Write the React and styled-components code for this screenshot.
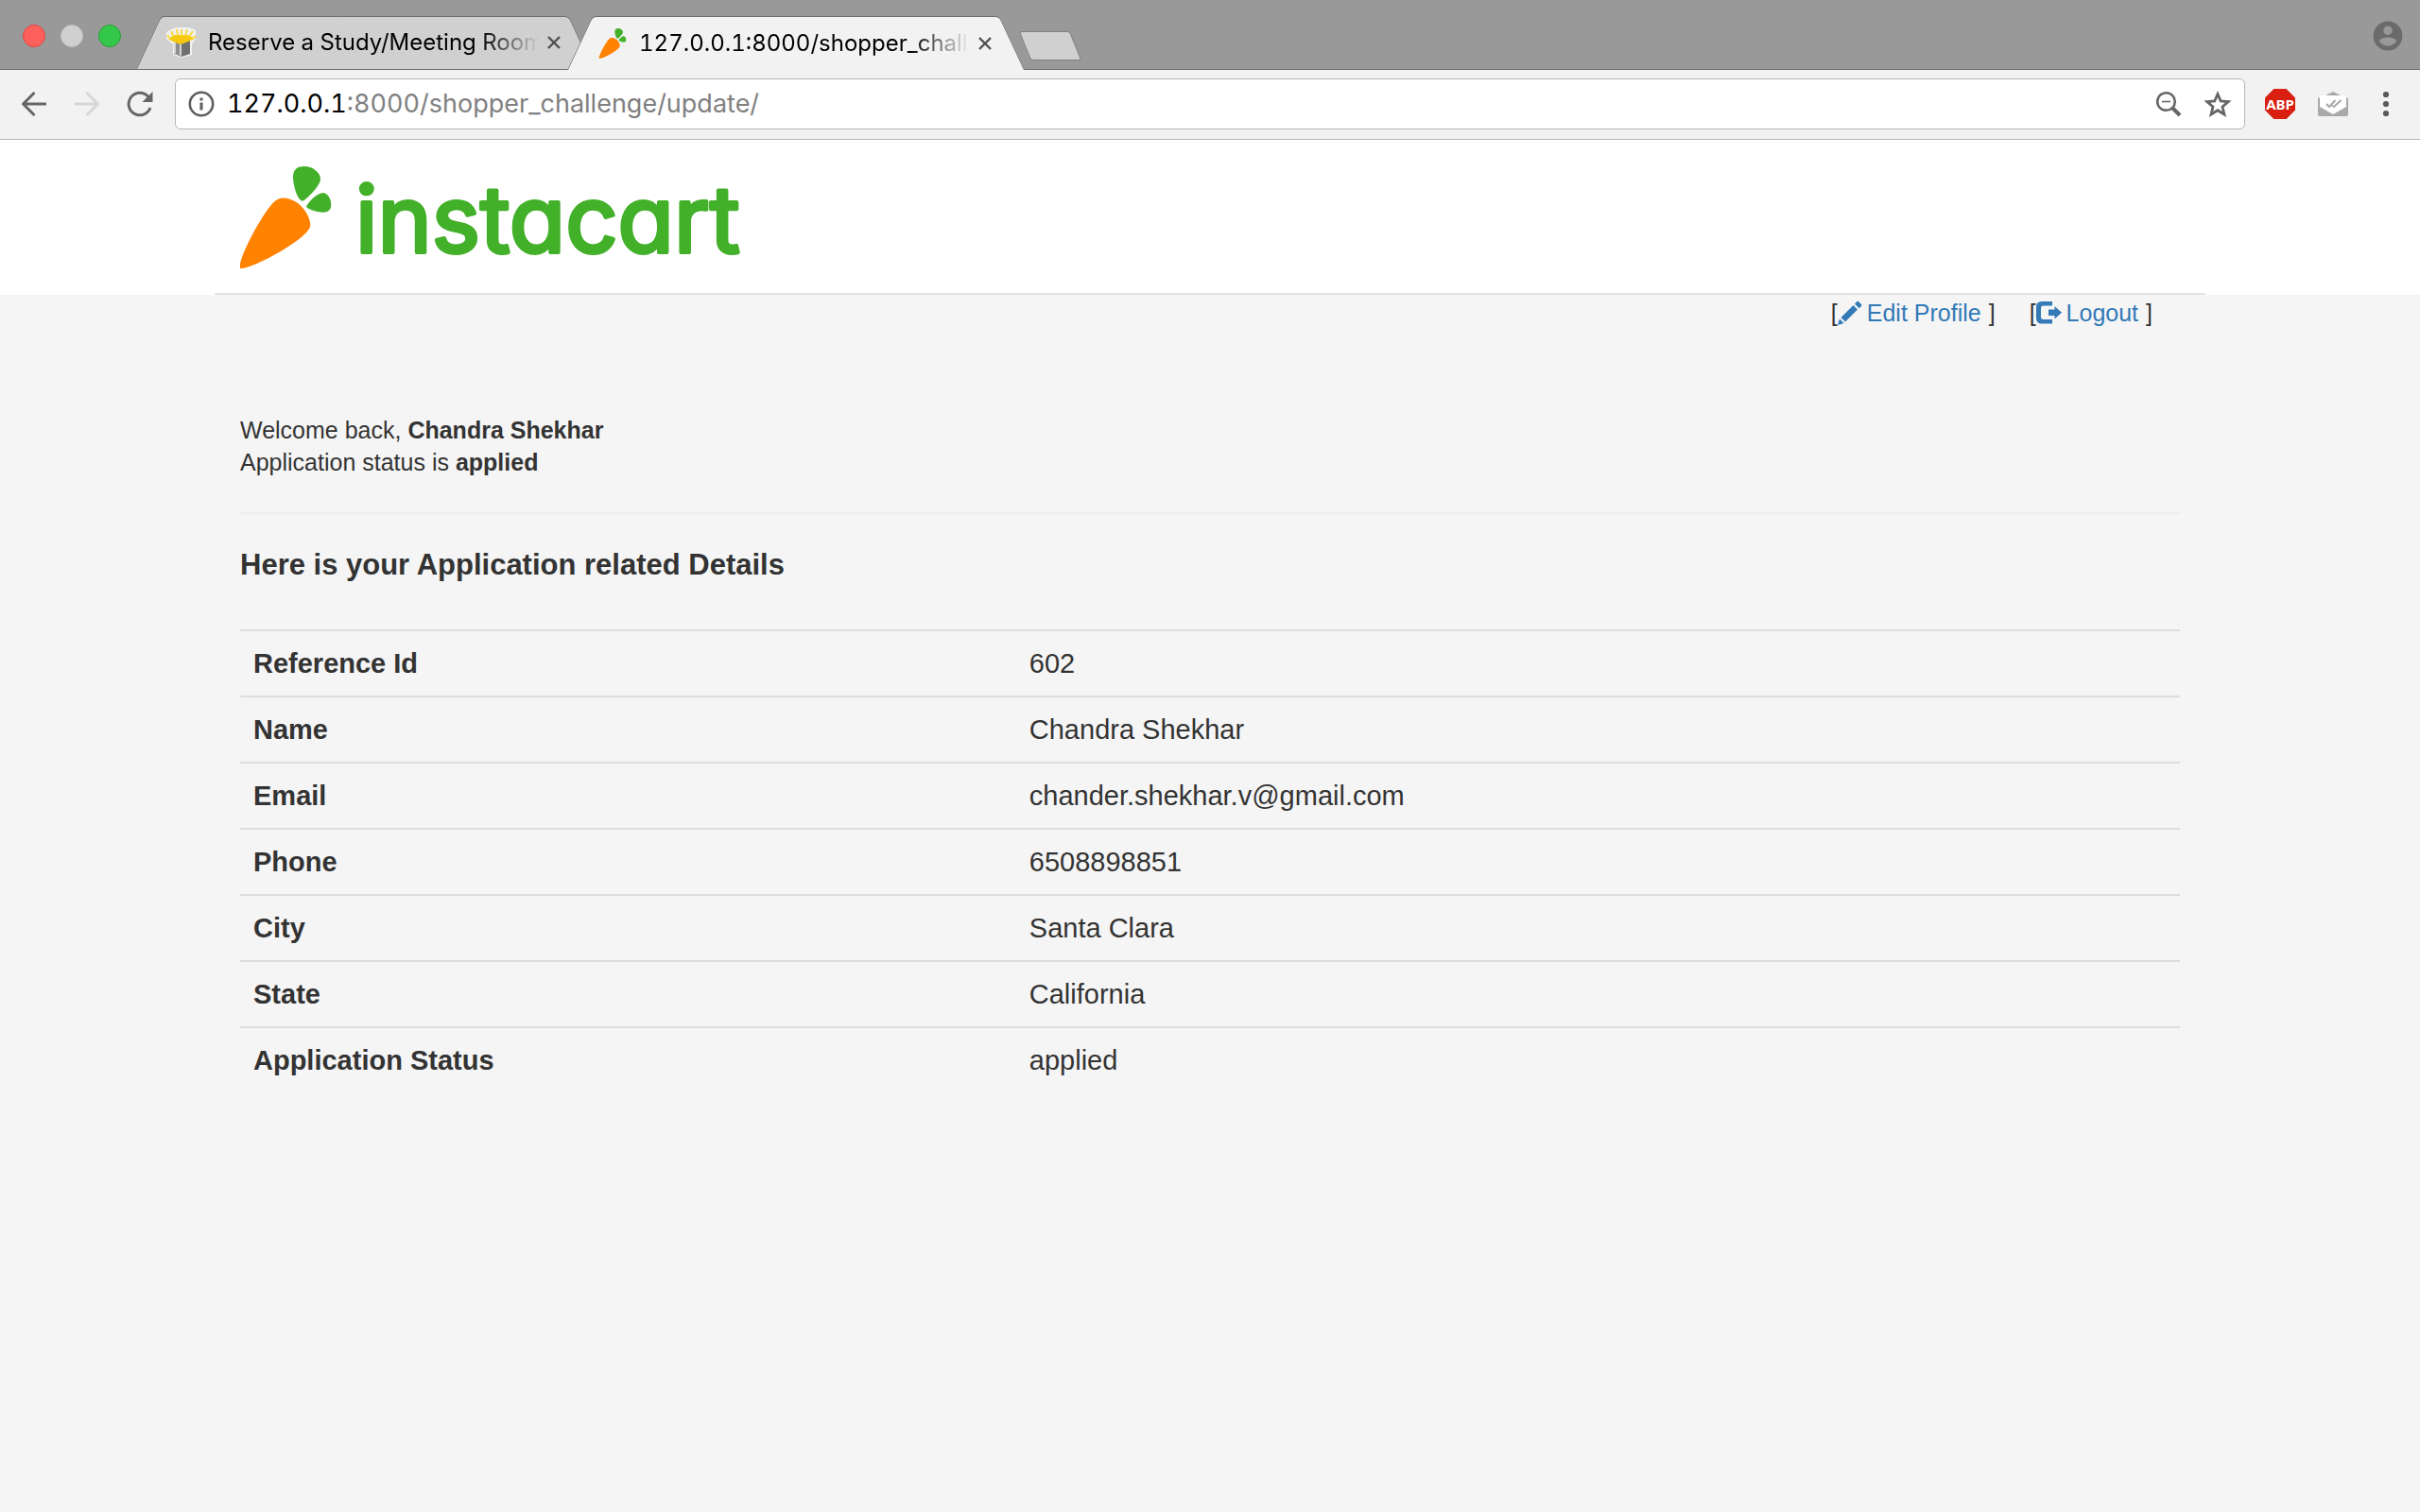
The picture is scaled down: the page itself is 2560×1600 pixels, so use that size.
import React from "react";
import styled, { createGlobalStyle, css } from "styled-components";

const GlobalStyle = createGlobalStyle`
  *, *::before, *::after { box-sizing: border-box; }
  html, body { margin: 0; padding: 0; }
  body {
    background: #f5f5f5;
    color: #333;
    font-family: "Liberation Sans", Arial, sans-serif;
    font-size: 25px;
    line-height: 34px;
  }
`;

const Screen = styled.div`
  min-height: 100vh;
  display: flex;
  flex-direction: column;
`;

/* ---------- browser window ---------- */

const chromeFont = css`
  font-family: Inter, Roboto, sans-serif;
  font-variant-numeric: tabular-nums;
`;

const TabStrip = styled.div`
  ${chromeFont}
  display: flex;
  align-items: flex-start;
  height: 74px;
  padding: 0 16px 0 24px;
  background: #999;
  box-shadow: inset 0 -1px 0 #6c6c6c;
`;

const WindowButtons = styled.div`
  display: flex;
  gap: 16px;
  padding-top: 26px;
  width: 120px;
`;

const WindowButton = styled.button`
  width: 24px;
  height: 24px;
  padding: 0;
  border: 1px solid ${(p) => p.$edge};
  border-radius: 50%;
  background: ${(p) => p.$fill};
`;

const Tab = styled.div`
  position: relative;
  z-index: ${(p) => (p.$active ? 2 : 1)};
  display: flex;
  align-items: center;
  width: 484px;
  height: ${(p) => (p.$active ? 57 : 56)}px;
  margin: 17px 0 0 ${(p) => (p.$active ? -28 : 0)}px;
  padding: 0 34px 0 32px;

  &::before,
  &::after {
    content: "";
    position: absolute;
    z-index: -1;
    top: 0;
    bottom: 0;
    width: 50%;
    background: ${(p) => (p.$active ? "#f2f2f2" : "#d0d0d0")};
    border-top: 1px solid #6c6c6c;
  }
  &::before {
    left: 0;
    border-left: 1px solid #6c6c6c;
    border-top-left-radius: 5px;
    transform: skewX(-25deg);
    transform-origin: bottom;
  }
  &::after {
    right: 0;
    border-right: 1px solid #6c6c6c;
    border-top-right-radius: 5px;
    transform: skewX(25deg);
    transform-origin: bottom;
  }
`;

const TabTitle = styled.span`
  flex: 1;
  min-width: 0;
  margin: 0 4px 0 12px;
  overflow: hidden;
  white-space: nowrap;
  color: #000;
  font-size: 24px;
  line-height: 34px;
  mask-image: linear-gradient(to right, #000 calc(100% - 66px), transparent calc(100% - 4px));
`;

const IconButton = styled.button`
  display: flex;
  align-items: center;
  justify-content: center;
  flex: none;
  width: ${(p) => p.$width}px;
  height: 32px;
  padding: 0;
  border: 0;
  background: none;
  color: ${(p) => p.$color || "#666"};
`;

const NewTab = styled.button`
  width: 54px;
  height: 31px;
  margin: 33px 0 0 0;
  padding: 0;
  border: 1px solid #808080;
  border-radius: 3px;
  background: #d0d0d0;
  transform: skewX(22deg);
`;

const Profile = styled.div`
  margin: 22px 0 0 auto;
`;

const Toolbar = styled.div`
  ${chromeFont}
  display: flex;
  align-items: center;
  height: 74px;
  padding: 0 16px 1px 16px;
  background: #f2f2f2;
  border-bottom: 1px solid #b6b6b6;
`;

const NavButtons = styled.div`
  display: flex;
  gap: 16px;
  width: 169px;
`;

const Omnibox = styled.div`
  display: flex;
  align-items: center;
  flex: 1;
  height: 54px;
  padding: 0 8px 0 10px;
  background: #fff;
  border: 1px solid #b6b6b6;
  border-radius: 6px;
  font-size: 27px;
  line-height: 36px;
`;

const Host = styled.label`
  margin-left: 10px;
  color: #000;
`;

const UrlInput = styled.input`
  flex: 1;
  min-width: 0;
  padding: 0;
  border: 0;
  outline: 0;
  background: none;
  color: #808080;
  font: inherit;
  font-variant-numeric: inherit;
`;

const OmniboxActions = styled.div`
  display: flex;
  gap: 12px;
`;

const Extensions = styled.div`
  display: flex;
  align-items: center;
  gap: 16px;
  margin-left: 17px;
`;

/* ---------- page ---------- */

const SiteHeader = styled.header`
  background: #fff;
`;

const Container = styled.div`
  max-width: 2106px;
  margin: 0 auto;
  padding: 0 27px;
`;

const HeaderInner = styled(Container)`
  padding-top: 28px;
  padding-bottom: 26px;
  border-bottom: 2px solid #e3e3e3;
`;

const LogoLink = styled.a`
  display: flex;
  width: fit-content;
`;

const Wordmark = styled.text`
  font-family: Inter, "Liberation Sans", sans-serif;
  font-size: 97px;
  font-weight: 400;
  font-feature-settings: "cv11" 1;
  fill: #43b02a;
  stroke: #43b02a;
  stroke-width: 4px;
  stroke-linejoin: round;
`;

const AccountNav = styled.nav`
  display: flex;
  justify-content: flex-end;
  gap: 36px;
  padding: 2px 29px 0 0;
`;

const AccountItem = styled.span`
  display: flex;
  align-items: center;
  gap: 8px;
`;

const AccountLink = styled.a`
  display: flex;
  align-items: center;
  gap: 5px;
  color: #337ab7;
  text-decoration: none;
`;

const Bracketed = styled.span`
  display: flex;
  align-items: center;
`;

const Welcome = styled.p`
  margin: 90px 0 36px;
`;

const Divider = styled.hr`
  height: 2px;
  margin: 0;
  border: 0;
  background: #eee;
`;

const Heading = styled.h4`
  margin: 36px 0 50px;
  font-size: 31px;
  line-height: 36px;
  font-weight: 700;
`;

const Details = styled.table`
  width: 100%;
  border-collapse: separate;
  border-spacing: 0;
  table-layout: fixed;
  font-size: 29px;
  line-height: 40px;
`;

const cell = css`
  padding: 14px;
  border-top: 2px solid #ddd;
  text-align: left;
`;

const Label = styled.th`
  ${cell}
  width: 40%;
`;

const Value = styled.td`
  ${cell}
`;

/* ---------- drawings ---------- */

const CarrotShape = () => (
  <g>
    <path
      fill="#ff8200"
      d="M0 108V103C3 88 24 50 35 38.500C40 33 46 32.500 52 34.500C64 38 73 50 74.300 61C74.500 66 71 69 66 74C52 86 20 104 5 107.500C3 108 1 108 0 108Z"
    />
    <path
      fill="#43b02a"
      d="M65 36.500C59 33 56 18 56 11C56 3 61 0 68 0C76 0 85 6 85 13.500C85 20 72 33 67.500 36C66.500 36.600 65.700 36.800 65 36.500Z"
    />
    <path
      fill="#43b02a"
      d="M70.500 41.500C73 37 82 28 88 28C93 28.500 96.500 35 96.300 41C96 46 93 48.700 88 48.700C82 48.700 73 46 70.700 43.500C70 42.800 70 42.200 70.500 41.500Z"
    />
  </g>
);

const Logo = () => (
  <svg width="540" height="108" viewBox="0 0 540 108" overflow="visible">
    <CarrotShape />
    <Wordmark x="122" y="91">instacart</Wordmark>
  </svg>
);

const CarrotIcon = () => (
  <svg width="32" height="32" viewBox="-6 0 108 108">
    <CarrotShape />
  </svg>
);

const PlanterIcon = () => (
  <svg width="32" height="32" viewBox="0 0 32 32">
    <path fill="#fff" opacity=".7" d="M0 5 5 2 11 0H24L31 3V12L27 18V29L17 32 7 29V18L0 12Z" />
    <path fill="#8e8e8e" d="M8 14 17 17V31L8 28Z" />
    <path fill="#707070" d="M16 17 25 14V28L16 31Z" />
    <path fill="#d5d5d5" d="M8 15H10V28L8 27ZM14 18H16V30L14 29Z" />
    <path fill="#f6c90f" d="M2 12 9 8H23L30 12 23 15 15 18 7 15Z" />
    <path
      stroke="#f8d93c"
      strokeWidth="2"
      fill="none"
      d="M4 12 1 8M8 10 5 4M12 9 11 2M16 9V2M20 9 22 2M24 10 28 4M27 12 31 9"
    />
  </svg>
);

const CloseIcon = () => (
  <svg width="14" height="14" viewBox="0 0 14 14" stroke="currentColor" strokeWidth="2.400">
    <path d="M1 1 13 13M13 1 1 13" />
  </svg>
);

const ArrowIcon = ({ flip }) => (
  <svg width="26" height="26" viewBox="0 0 26 26" fill="none" stroke="currentColor" strokeWidth="3">
    <path
      strokeLinejoin="miter"
      d={flip ? "M0 13H24M12.500 1 24.500 13 12.500 25" : "M26 13H2M13.500 1 1.500 13 13.500 25"}
    />
  </svg>
);

const ReloadIcon = () => (
  <svg width="28" height="28" viewBox="0 0 28 28">
    <path d="M23 6.500A11.800 11.800 0 1 0 25 18" fill="none" stroke="currentColor" strokeWidth="3" />
    <path d="M27.500 1V12H16.500Z" fill="currentColor" />
  </svg>
);

const InfoIcon = () => (
  <svg width="32" height="32" viewBox="0 0 32 32">
    <circle cx="16" cy="16" r="12.200" fill="none" stroke="#5f5f5f" strokeWidth="2.600" />
    <path fill="#5f5f5f" d="M14.500 9.500H17.500V12.500H14.500ZM14.500 14.500H17.500V22.500H14.500Z" />
  </svg>
);

const ZoomOutIcon = () => (
  <svg width="28" height="28" viewBox="0 0 28 28" fill="none" stroke="currentColor">
    <circle cx="11.500" cy="11.500" r="9.300" strokeWidth="2.600" />
    <path d="M7 11.500H16" strokeWidth="1.600" />
    <path d="M18.500 18.500 26 26" strokeWidth="4" />
  </svg>
);

const StarIcon = () => (
  <svg width="30" height="28" viewBox="0 0 30 28">
    <path
      fill="none"
      stroke="currentColor"
      strokeWidth="2.800"
      d="M15 3.500 18.200 11 26.200 11.600 20 16.900 21.900 25 15 20.700 8.100 25 10 16.900 3.800 11.600 11.800 11Z"
    />
  </svg>
);

const AbpIcon = () => (
  <svg width="32" height="32" viewBox="0 0 32 32">
    <path fill="#d81f10" d="M9.400 0H22.600L32 9.400V22.600L22.600 32H9.400L0 22.600V9.400Z" />
    <text
      x="16"
      y="22"
      textAnchor="middle"
      fill="#fff"
      fontFamily="Noto Sans, Open Sans, sans-serif"
      fontWeight="700"
      fontSize="15"
    >
      ABP
    </text>
  </svg>
);

const MailIcon = () => (
  <svg width="32" height="28" viewBox="0 0 32 28">
    <path fill="#a9a9a9" d="M8 5 16 1 24 5Z" />
    <rect y="7" width="32" height="20" rx="2" fill="#a9a9a9" />
    <path fill="#fff" d="M2 5H30V17L16 25 2 17Z" />
    <path fill="none" stroke="#a9a9a9" strokeWidth="2" d="M9 14 12 17 18.500 10M15 15.500 17 17 24.500 10" />
  </svg>
);

const MenuIcon = () => (
  <svg width="8" height="28" viewBox="0 0 8 28" fill="#5a5a5a">
    <circle cx="4" cy="4" r="3.100" />
    <circle cx="4" cy="14" r="3.100" />
    <circle cx="4" cy="24" r="3.100" />
  </svg>
);

const ProfileIcon = () => (
  <svg width="32" height="32" viewBox="0 0 32 32">
    <circle cx="16" cy="16" r="15.400" fill="#6b6b6b" />
    <circle cx="16" cy="10.200" r="4.700" fill="#999" />
    <path fill="#999" d="M6.800 21.500C8 18.500 13 17.500 16 17.500S24 18.500 25.200 21.500C23 25 19.500 26.600 16 26.600S9 25 6.800 21.500Z" />
  </svg>
);

const PencilIcon = () => (
  <svg width="26" height="26" viewBox="0 0 26 26" fill="#337ab7">
    <path d="M0 26 2 19.500 6.500 24ZM3.500 18 16.500 5 21 9.500 8 22.500ZM18 3.500 20.500 1Q21.200 .3 22 1L25.200 4.200Q26 5 25.200 5.700L22.700 8.200Z" />
  </svg>
);

const LogoutIcon = () => (
  <svg width="27" height="24" viewBox="0 0 27 24" fill="#337ab7">
    <path d="M17 0V4.600H7.500Q5 4.600 5 7V17Q5 19 7.500 19H17V23.500H6Q0 23.500 0 17.500V6Q0 0 6 0Z" />
    <path d="M13 8.500H19.500V5L27 11.800 19.500 18.500V15H13Z" />
  </svg>
);

/* ---------- content ---------- */

const application = [
  ["Reference Id", "602"],
  ["Name", "Chandra Shekhar"],
  ["Email", "chander.shekhar.v@gmail.com"],
  ["Phone", "6508898851"],
  ["City", "Santa Clara"],
  ["State", "California"],
  ["Application Status", "applied"],
];

const BrowserTab = ({ icon, title, active }) => (
  <Tab $active={active}>
    {icon}
    <TabTitle>{title}</TabTitle>
    <IconButton $width={16} $color="#4f4f4f" aria-label="Close tab">
      <CloseIcon />
    </IconButton>
  </Tab>
);

const AccountAction = ({ icon, children }) => (
  <AccountItem>
    <Bracketed>
      [
      <AccountLink href="#">
        {icon}
        {children}
      </AccountLink>
    </Bracketed>
    ]
  </AccountItem>
);

export default function App() {
  return (
    <Screen>
      <GlobalStyle />
      <TabStrip>
        <WindowButtons>
          <WindowButton $fill="#fc605c" $edge="#e0443e" aria-label="Close" />
          <WindowButton $fill="#d0d0d0" $edge="#bfbfbf" aria-label="Minimize" />
          <WindowButton $fill="#34c84a" $edge="#24a135" aria-label="Zoom" />
        </WindowButtons>
        <BrowserTab icon={<PlanterIcon />} title="Reserve a Study/Meeting Room" />
        <BrowserTab icon={<CarrotIcon />} title="127.0.0.1:8000/shopper_chall" active />
        <NewTab aria-label="New tab" />
        <Profile>
          <IconButton $width={36} aria-label="Profile">
            <ProfileIcon />
          </IconButton>
        </Profile>
      </TabStrip>
      <Toolbar>
        <NavButtons>
          <IconButton $width={40} aria-label="Back">
            <ArrowIcon />
          </IconButton>
          <IconButton $width={40} $color="#d6d6d6" aria-label="Forward">
            <ArrowIcon flip />
          </IconButton>
          <IconButton $width={40} aria-label="Reload">
            <ReloadIcon />
          </IconButton>
        </NavButtons>
        <Omnibox>
          <IconButton $width={34} aria-label="Site information">
            <InfoIcon />
          </IconButton>
          <Host htmlFor="address">127.0.0.1</Host>
          <UrlInput id="address" defaultValue=":8000/shopper_challenge/update/" />
          <OmniboxActions>
            <IconButton $width={40} aria-label="Zoom out">
              <ZoomOutIcon />
            </IconButton>
            <IconButton $width={40} aria-label="Bookmark">
              <StarIcon />
            </IconButton>
          </OmniboxActions>
        </Omnibox>
        <Extensions>
          <IconButton $width={40} aria-label="Adblock Plus">
            <AbpIcon />
          </IconButton>
          <IconButton $width={40} aria-label="Mail tracker">
            <MailIcon />
          </IconButton>
          <IconButton $width={40} aria-label="Menu">
            <MenuIcon />
          </IconButton>
        </Extensions>
      </Toolbar>

      <SiteHeader>
        <HeaderInner>
          <LogoLink href="#">
            <Logo />
          </LogoLink>
        </HeaderInner>
      </SiteHeader>

      <main>
        <Container>
          <AccountNav>
            <AccountAction icon={<PencilIcon />}>Edit Profile</AccountAction>
            <AccountAction icon={<LogoutIcon />}>Logout</AccountAction>
          </AccountNav>
          <Welcome>
            Welcome back, <strong>Chandra Shekhar</strong>
            <br />
            Application status is <strong>applied</strong>
          </Welcome>
          <Divider />
          <Heading>Here is your Application related Details</Heading>
          <Details>
            <tbody>
              {application.map(([label, value]) => (
                <tr key={label}>
                  <Label scope="row">{label}</Label>
                  <Value>{value}</Value>
                </tr>
              ))}
            </tbody>
          </Details>
        </Container>
      </main>
    </Screen>
  );
}
